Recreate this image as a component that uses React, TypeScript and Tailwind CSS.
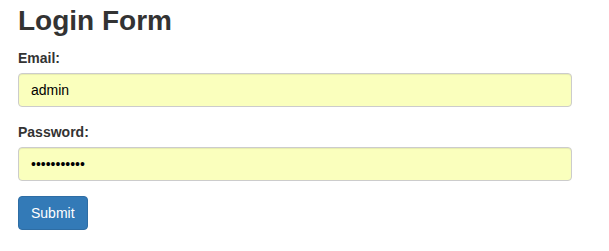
export default function App() {
  return (
    <div
      className="bg-white px-[18px] text-[#333]"
      style={{ fontFamily: '"Liberation Sans", Arial, sans-serif' }}
    >
      <h2 className="pt-[4px] text-[28px] font-bold leading-[33px]">Login Form</h2>
      <form className="mt-[11px] w-[554px]" onSubmit={(e) => e.preventDefault()}>
        <div className="mb-[15px]">
          <label className="mb-[5px] block text-[14px] font-bold leading-[20px]">Email:</label>
          <input
            type="text"
            readOnly
            value="admin"
            className="block h-[34px] w-full rounded-[4px] border border-[#ccc] bg-[#faffbd] px-[12px] text-[14px] text-black shadow-[inset_0_1px_1px_rgba(0,0,0,0.075)] outline-none"
          />
        </div>
        <div className="mb-[15px]">
          <label className="mb-[5px] block text-[14px] font-bold leading-[20px]">Password:</label>
          <input
            type="password"
            readOnly
            value="supersecret"
            className="block h-[34px] w-full rounded-[4px] border border-[#ccc] bg-[#faffbd] px-[12px] text-[14px] text-black shadow-[inset_0_1px_1px_rgba(0,0,0,0.075)] outline-none"
          />
        </div>
        <button
          type="submit"
          className="h-[34px] rounded-[4px] border border-[#2e6da4] bg-[#337ab7] px-[12px] text-[14px] leading-[20px] text-white"
        >
          Submit
        </button>
      </form>
    </div>
  );
}
